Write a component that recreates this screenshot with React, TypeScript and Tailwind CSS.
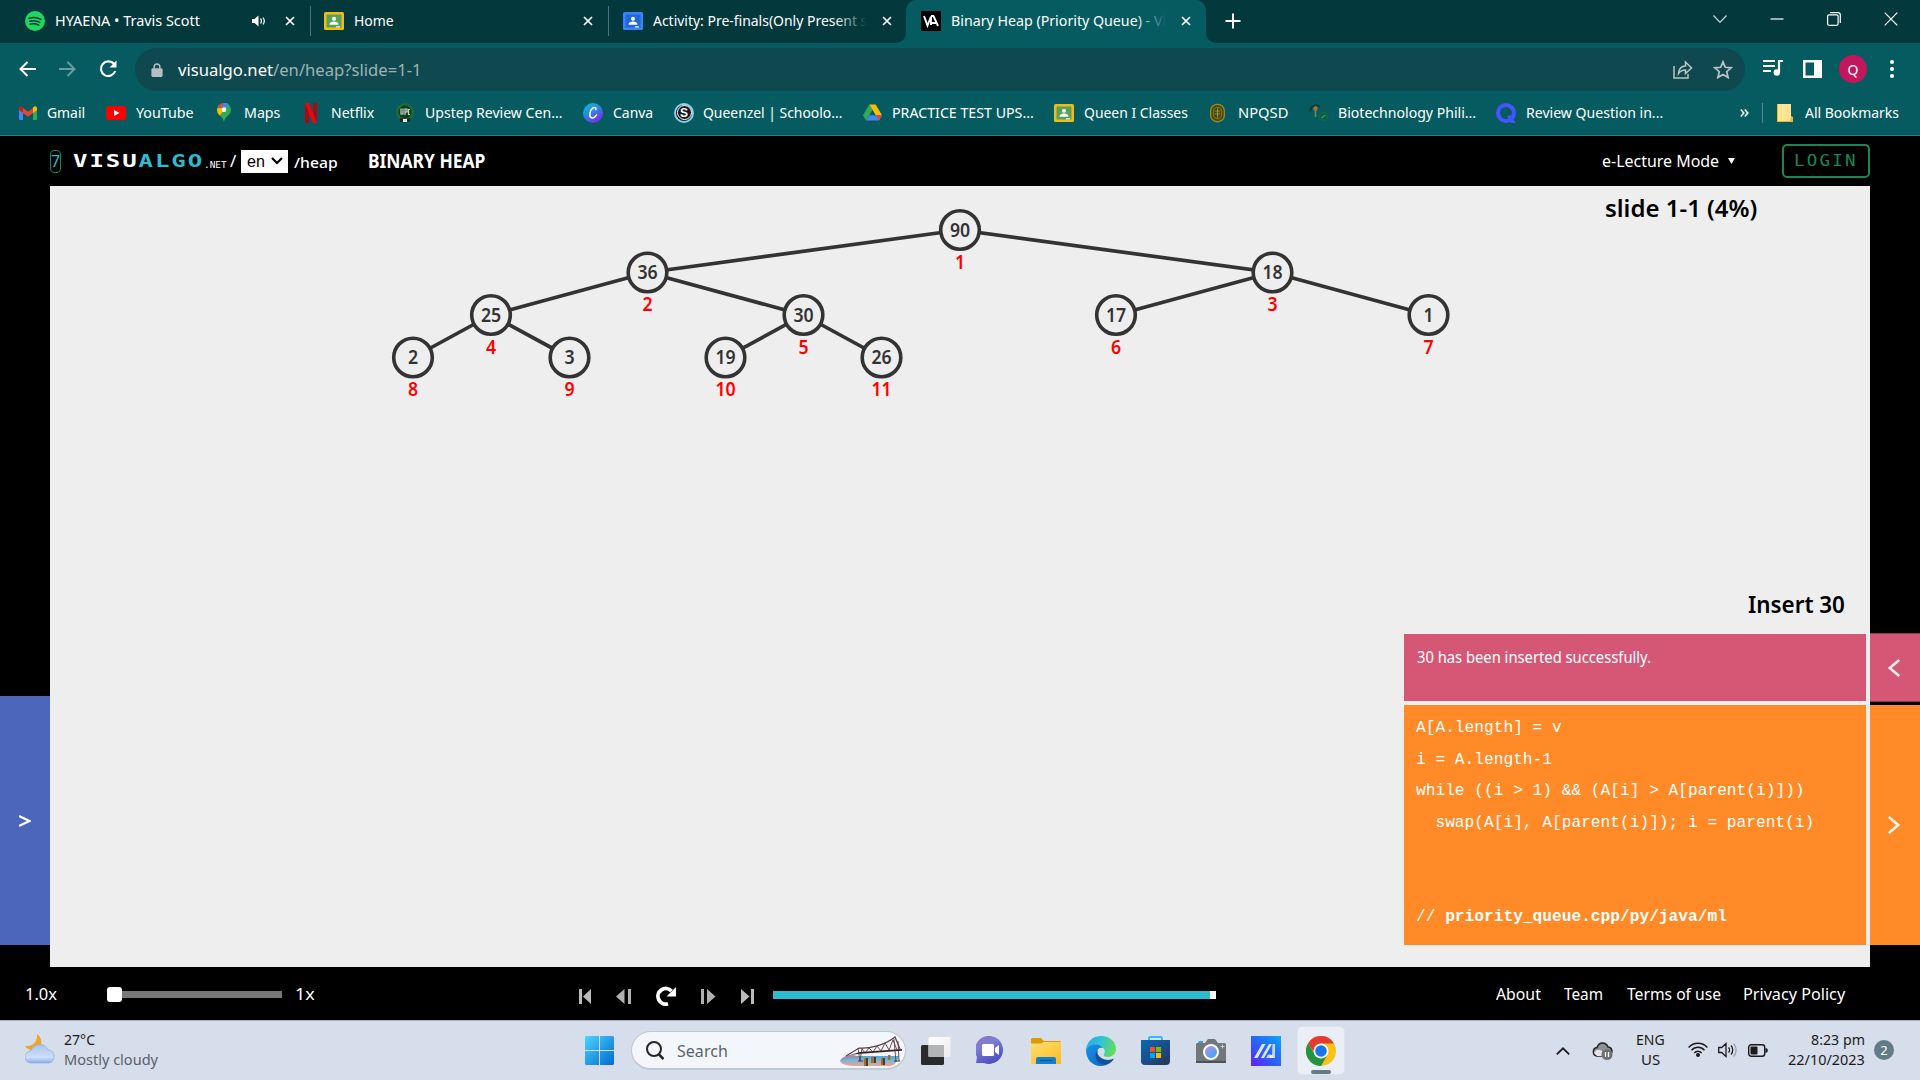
import { useLayoutEffect, useRef } from "react";
import type { ReactNode } from "react";

/** Single line of text stretched or condensed to fill the width of its box. */
function Fit({ className = "", inner = "", children }: { className?: string; inner?: string; children: ReactNode }) {
  const box = useRef<HTMLSpanElement>(null);
  const text = useRef<HTMLSpanElement>(null);
  useLayoutEffect(() => {
    if (box.current && text.current) {
      const scale = box.current.clientWidth / text.current.offsetWidth;
      text.current.style.transform = `scaleX(${scale})`;
    }
  }, []);
  return (
    <span ref={box} className={`block shrink-0 ${className}`}>
      <span ref={text} className={`inline-block origin-left whitespace-nowrap ${inner}`}>
        {children}
      </span>
    </span>
  );
}

function CloseX({ className = "" }: { className?: string }) {
  return (
    <svg viewBox="0 0 10 10" className={`h-[10px] w-[10px] shrink-0 ${className}`} stroke="#fff" strokeWidth="1.7">
      <path d="M1 1 9 9M9 1 1 9" />
    </svg>
  );
}

function Classroom({ frame, board }: { frame: string; board: string }) {
  return (
    <svg viewBox="0 0 20 18" className="h-[18px] w-5 shrink-0">
      <rect width="20" height="18" rx="1.5" fill={frame} />
      <rect x="2.5" y="2.5" width="15" height="13" fill={board} />
      <circle cx="10" cy="6.8" r="2" fill="#fff" />
      <path d="M5.5 12.8c0-2.6 2.3-3.4 4.5-3.4s4.5.8 4.5 3.4z" fill="#fff" />
      <rect x="12" y="14.2" width="4" height="1.3" fill="#e8eaed" />
    </svg>
  );
}

function TabStrip() {
  return (
    <div className="flex h-[43px] items-center bg-[#03383d] pb-px text-[15px] leading-[22px] text-white">
      <svg viewBox="0 0 20 20" className="ml-[25px] h-5 w-5 shrink-0">
        <circle cx="10" cy="10" r="10" fill="#1ed760" />
        <path d="M4 7.2c4-1.2 8.500-.8 12 1.200M4.600 10.300c3.500-1 7.200-.6 10.200 1.100M5.200 13.200c3-.8 6-.5 8.500.9" fill="none" stroke="#06363a" strokeWidth="1.500" strokeLinecap="round" />
      </svg>
      <Fit className="-mt-[2px] ml-[10px] w-[145px]">HYAENA • Travis Scott</Fit>
      <svg viewBox="0 0 13 12" className="ml-[52px] h-3 w-[13px] shrink-0" fill="#fff">
        <path d="M0 4h2.500L6.500.5v11L2.500 8H0z" />
        <path d="M8.500 3.500c1.200 1.200 1.200 3.800 0 5M11 2.500c1.500 2 1.500 5 0 7" fill="none" stroke="#fff" strokeWidth="1.200" />
      </svg>
      <CloseX className="ml-5" />
      <div className="ml-[15px] h-[30px] w-px bg-[#4c7478]" />
      <div className="ml-[13px] flex"><Classroom frame="#f5ba14" board="#57a15b" /></div>
      <Fit className="-mt-[2px] ml-[10px] w-10">Home</Fit>
      <CloseX className="ml-[189px]" />
      <div className="ml-[15px] h-[30px] w-px bg-[#4c7478]" />
      <div className="ml-[14px] flex"><Classroom frame="#3b82f6" board="#1f68da" /></div>
      <div className="relative -mt-[2px] ml-[10px] w-[214px] overflow-hidden">
        <Fit className="w-[214px]">Activity: Pre-finals(Only Present s</Fit>
        <div className="absolute inset-y-0 right-0 w-8 bg-linear-to-r from-transparent to-[#03383d]" />
      </div>
      <CloseX className="ml-[15px]" />
      <div className="-mb-px ml-[4px] h-[43px] w-[10px] bg-[#065b61]">
        <div className="h-full w-full rounded-br-[10px] bg-[#03383d]" />
      </div>
      <div className="-mb-px flex h-[43px] w-[300px] shrink-0 items-center rounded-t-[10px] bg-[#065b61] pb-px">
        <svg viewBox="0 0 20 20" className="ml-[15px] h-5 w-5 shrink-0">
          <rect width="20" height="20" fill="#000" />
          <path d="M3 5l3.500 9.500L10 5.500V14M10 5h2.500l4.500 10M10 12h5" fill="none" stroke="#fff" strokeWidth="1.900" />
        </svg>
        <div className="relative -mt-[2px] ml-[10px] w-[215px] overflow-hidden">
          <Fit className="w-[215px]">Binary Heap (Priority Queue) - Vi</Fit>
          <div className="absolute inset-y-0 right-0 w-8 bg-linear-to-r from-transparent to-[#065b61]" />
        </div>
        <CloseX className="ml-[15px]" />
      </div>
      <div className="-mb-px h-[43px] w-[10px] bg-[#065b61]">
        <div className="h-full w-full rounded-bl-[10px] bg-[#03383d]" />
      </div>
      <svg viewBox="0 0 16 16" className="ml-[9px] h-4 w-4 shrink-0" stroke="#fff" strokeWidth="2">
        <path d="M8 .5v15M.5 8h15" />
      </svg>
      <svg viewBox="0 0 14 8" className="-mt-[5px] ml-auto h-2 w-[14px]" fill="none" stroke="#dfe8e8" strokeWidth="1.100">
        <path d="M.5.500 7 7.300 13.500.5" />
      </svg>
      <svg viewBox="0 0 14 14" className="-mt-[5px] ml-[43px] h-[14px] w-[14px]" stroke="#fff" strokeWidth="1.200">
        <path d="M.5 7h13" />
      </svg>
      <svg viewBox="0 0 14 14" className="-mt-[5px] ml-[43px] h-[14px] w-[14px]" fill="none" stroke="#fff" strokeWidth="1.200">
        <rect x=".6" y="2.800" width="10.500" height="10.500" rx="1.500" />
        <path d="M3 .7h8a2.300 2.300 0 0 1 2.300 2.300v8" />
      </svg>
      <svg viewBox="0 0 14 14" className="-mt-[5px] mr-[22px] ml-[43px] h-[14px] w-[14px]" stroke="#fff" strokeWidth="1.200">
        <path d="M.7.700 13.300 13.300M13.300.7.700 13.300" />
      </svg>
    </div>
  );
}

function Toolbar() {
  return (
    <div className="flex h-[53px] items-center pb-[1px] text-white">
      <svg viewBox="0 0 17 16" className="ml-[19px] h-4 w-[17px] shrink-0" fill="none" stroke="#fff" strokeWidth="2">
        <path d="M8.500 1 1.500 8l7 7M1.500 8H17" />
      </svg>
      <svg viewBox="0 0 17 16" className="ml-[23px] h-4 w-[17px] shrink-0" fill="none" stroke="#6a9ca0" strokeWidth="2">
        <path d="m8.500 1 7 7-7 7M15.500 8H0" />
      </svg>
      <svg viewBox="0 0 18 18" className="ml-[23px] h-[18px] w-[18px] shrink-0">
        <path d="M15 4.200A7.300 7.300 0 1 0 16.200 11" fill="none" stroke="#fff" strokeWidth="2.100" />
        <path d="M17.500.5v7h-7z" fill="#fff" />
      </svg>
      <div className="ml-[18px] flex h-[43px] w-[1610px] shrink-0 items-center rounded-full bg-[#10484f]">
        <svg viewBox="0 0 12 15" className="mt-px ml-[16px] h-[14px] w-[12px] shrink-0">
          <rect y="5.500" width="12" height="9.500" rx="1.500" fill="#b6bfc2" />
          <path d="M3 6V4a3 3 0 0 1 6 0v2" fill="none" stroke="#b6bfc2" strokeWidth="1.600" />
        </svg>
        <Fit className="mt-[2px] ml-[15px] w-[244px] text-[16.500px] leading-6">
          visualgo.net<span className="text-[#9cb4b7]">/en/heap?slide=1-1</span>
        </Fit>
        <svg viewBox="0 0 20 19" className="ml-auto h-[19px] w-5" fill="none" stroke="#b9c5c7" strokeWidth="1.500">
          <path d="M1 6v12h14v-4M5.500 13.500c.5-5 3.500-7.500 7-7.500V2l6 6-6 5.500V10c-3 0-5.200 1-7 3.500z" />
        </svg>
        <svg viewBox="0 0 20 19" className="mr-[12px] ml-[20px] h-[19px] w-5" fill="none" stroke="#b9c5c7" strokeWidth="1.700">
          <path d="m10 1.800 2.300 5.500 5.900.5-4.500 3.900 1.400 5.800-5.100-3.100-5.100 3.100 1.400-5.800-4.500-3.900 5.900-.5z" />
        </svg>
      </div>
      <svg viewBox="0 0 20 17" className="-mt-1 ml-[18px] h-[17px] w-5 shrink-0">
        <path d="M0 2h12M0 7h12M0 12h8" stroke="#fff" strokeWidth="2.100" />
        <path d="M16 13.500V2h4" fill="none" stroke="#fff" strokeWidth="2.200" />
        <circle cx="13.800" cy="13.500" r="3.200" fill="#fff" />
      </svg>
      <svg viewBox="0 0 19 18" className="ml-[20px] h-[18px] w-[19px] shrink-0">
        <path d="M0 0h19v18H0zM2.500 2.500v13H11v-13z" fill="#fff" fillRule="evenodd" />
      </svg>
      <div className="ml-[17px] flex h-7 w-7 shrink-0 items-center justify-center rounded-full bg-[#c2185b] text-[14px]">Q</div>
      <svg viewBox="0 0 4 18" className="ml-[23px] h-[18px] w-1 shrink-0" fill="#fff">
        <circle cx="2" cy="2" r="2" /><circle cx="2" cy="9" r="2" /><circle cx="2" cy="16" r="2" />
      </svg>
    </div>
  );
}

function Bookmarks() {
  return (
    <div className="flex h-[39px] items-center pb-[6px] text-[15px] leading-[22px] text-white">
      <svg viewBox="0 0 18 14" className="ml-[19px] h-[14px] w-[18px] shrink-0">
        <path d="M0 2v11a1 1 0 0 0 1 1h3V5z" fill="#4285f4" />
        <path d="M18 2v11a1 1 0 0 1-1 1h-3V5z" fill="#34a853" />
        <path d="M4 7V2l5 3.800L14 2v5l-5 3.800z" fill="#ea4335" />
        <path d="M14 7V1.500C16-.6 18 .5 18 2.500V4z" fill="#fbbc04" />
        <path d="M4 7V1.500C2-.6 0 .5 0 2.500V4z" fill="#c5221f" />
      </svg>
      <Fit className="-mt-px ml-[10px] w-[38px]">Gmail</Fit>
      <svg viewBox="0 0 20 14" className="ml-[21px] h-[14px] w-5 shrink-0">
        <rect width="20" height="14" rx="3" fill="#f00" /><path d="m8 4 5.500 3L8 10z" fill="#fff" />
      </svg>
      <Fit className="-mt-px ml-[10px] w-[58px]">YouTube</Fit>
      <svg viewBox="0 0 14 19" className="ml-[23px] h-[19px] w-[14px] shrink-0">
        <path d="M7 0C3 0 0 3 0 7c0 5 6 6 7 12 1-6 7-7 7-12 0-4-3-7-7-7z" fill="#34a853" />
        <path d="M.8 3.800 5 7l6.500-6C10.300.3 8.700 0 7 0 4.300 0 2 1.400.8 3.800z" fill="#ea4335" />
        <path d="M7 0c1.700 0 3.300.4 4.800 1.800L7 7 4 4z" fill="#4285f4" />
        <path d="m2.500 12.500 7-8L.3 5.200C-.4 8.500.8 10.500 2.500 12.500z" fill="#fbbc04" />
        <circle cx="7" cy="6.800" r="2.300" fill="#fff" />
      </svg>
      <Fit className="-mt-px ml-[13px] w-[36px]">Maps</Fit>
      <svg viewBox="0 0 12 20" className="ml-[25px] h-5 w-3 shrink-0">
        <path d="M0 0h4v20l-4 .0zM8 0h4v20H8z" fill="#b1060f" /><path d="M0 0h4l8 20H8z" fill="#e50914" />
      </svg>
      <Fit className="-mt-px ml-[14px] w-[43px]">Netflix</Fit>
      <svg viewBox="0 0 20 20" className="ml-[21px] h-5 w-5 shrink-0">
        <circle cx="10" cy="9" r="9" fill="#1d6b35" /><circle cx="10" cy="9" r="6.500" fill="#0d3f20" />
        <path d="M6 5.500v5.500h2V5.500M10 12V6h2v3h-2M15 6.500h-1.500v5H15" stroke="#c9d6c9" fill="none" strokeWidth="1.200" />
        <path d="m5 15 5 1.500 5-1.500v4l-5-1.500L5 19z" fill="#222" /><path d="M8 16h4v3H8z" fill="#eee" />
      </svg>
      <Fit className="-mt-px ml-[10px] w-[137px]">Upstep Review Cen...</Fit>
      <svg viewBox="0 0 20 20" className="ml-[21px] h-5 w-5 shrink-0">
        <defs><linearGradient id="canva" x1="0" y1="0" x2=".6" y2="1"><stop stopColor="#00c4cc" /><stop offset=".5" stopColor="#2b8be0" /><stop offset="1" stopColor="#7d2ae8" /></linearGradient></defs>
        <circle cx="10" cy="10" r="10" fill="url(#canva)" />
        <path d="M12.800 6.700c.8-1.700-.8-3-3-1.500C6.500 7.400 5.600 14 8.700 14.800c2 .4 3.800-1 4.800-2.800" fill="none" stroke="#fff" strokeWidth="1.500" strokeLinecap="round" />
      </svg>
      <Fit className="-mt-px ml-[10px] w-10">Canva</Fit>
      <div className="ml-[21px] flex h-5 w-5 shrink-0 items-center justify-center rounded-full border-2 border-[#8dcdf0] bg-[#16181c] font-['Liberation_Sans'] text-[12px] leading-none font-bold">
        <span className="flex h-[15px] w-[15px] items-center justify-center rounded-full border border-white">S</span>
      </div>
      <Fit className="-mt-px ml-[9px] w-[139px]">Queenzel | Schoolo...</Fit>
      <svg viewBox="0 0 20 17" className="ml-[21px] h-[17px] w-[19px] shrink-0">
        <path d="M6.700 0 0 11.500 3.300 17 10 5.700z" fill="#34a853" /><path d="M6.700 0h6.600L20 11.500h-6.600z" fill="#fbbc04" />
        <path d="M6.500 11.500H20L16.700 17H3.300z" fill="#4285f4" /><path d="M13.500 11.500H20L16.700 17z" fill="#ea4335" />
      </svg>
      <Fit className="-mt-px ml-[10px] w-[142px]">PRACTICE TEST UPS...</Fit>
      <div className="ml-[20px] flex"><Classroom frame="#f5ba14" board="#57a15b" /></div>
      <Fit className="-mt-px ml-[10px] w-[104px]">Queen I Classes</Fit>
      <svg viewBox="0 0 16 20" className="ml-[22px] h-5 w-[15px] shrink-0">
        <rect x=".7" y=".7" width="14.600" height="18.600" rx="7" fill="#3f4a14" stroke="#a8871a" strokeWidth="1.400" />
        <rect x="3.500" y="4" width="9" height="12" rx="4" fill="none" stroke="#8c7a1e" /><path d="M5 8h6M5 11h6M8 5v10" stroke="#b08f20" />
      </svg>
      <Fit className="-mt-px ml-[13px] w-[50px]">NPQSD</Fit>
      <svg viewBox="0 0 20 18" className="ml-[21px] h-[18px] w-5 shrink-0" fill="none">
        <path d="M1 7C2 2 7-.5 11 3" stroke="#143a35" strokeWidth="2" /><circle cx="6.500" cy="4.500" r="2.200" fill="#a5762f" />
        <path d="M6.500 6v7" stroke="#7a8a3c" strokeWidth="1.500" /><circle cx="14.500" cy="12.500" r="4" fill="#0d5645" stroke="#0a6b4b" strokeWidth="1.500" />
        <path d="m12.500 14 4-3" stroke="#35a06a" strokeWidth="1.500" />
      </svg>
      <Fit className="-mt-px ml-[9px] w-[138px]">Biotechnology Phili...</Fit>
      <svg viewBox="0 0 20 20" className="ml-[20px] h-5 w-5 shrink-0">
        <circle cx="10" cy="10" r="8" fill="none" stroke="#4255ff" strokeWidth="4" /><path d="m11 13 4-1 4.500 8H15z" fill="#4255ff" />
      </svg>
      <Fit className="-mt-px ml-[10px] w-[137px]">Review Question in...</Fit>
      <svg viewBox="0 0 9 8" className="ml-[77px] h-2 w-[9px] shrink-0" fill="none" stroke="#fff" strokeWidth="1.600">
        <path d="m.8.500 3 3.500-3 3.500M4.800.500l3 3.500-3 3.500" />
      </svg>
      <div className="ml-[13px] h-5 w-px shrink-0 bg-[#4f8d91]" />
      <svg viewBox="0 0 16 18" className="ml-[14px] h-[18px] w-4 shrink-0">
        <path d="M0 0h14v12l2 1v5H0z" fill="#e5b93c" /><path d="M1 0h13v13l-1 4H1z" fill="#ffe491" />
      </svg>
      <Fit className="-mt-px ml-[12px] w-[94px]">All Bookmarks</Fit>
    </div>
  );
}

function SiteHeader() {
  return (
    <div className="flex h-[50px] items-center bg-black text-white">
      <div className="ml-[50px] flex h-[23px] w-[11px] shrink-0 items-center justify-center rounded-[4px] border border-[#198754] text-[16px] text-[#2ebbd1]">7</div>
      <Fit className="ml-[12px] w-[131px] font-['DejaVu_Sans_Mono'] text-[18.500px] leading-6" inner="font-bold tracking-[1.500px]">
        VISU<span className="text-[#2ebbd1]">ALGO</span>
      </Fit>
      <Fit className="mt-[7px] w-[23px] font-['DejaVu_Sans_Mono'] text-[9px] leading-3">.NET</Fit>
      <span className="ml-[3px] w-[8px] text-[17px]">/</span>
      <div className="ml-[3px] flex h-[23px] w-[47px] shrink-0 items-center bg-white pl-[6px] text-black">
        <Fit className="mt-[2px] w-[18px] font-['Liberation_Sans'] text-[17px] leading-5">en</Fit>
        <svg viewBox="0 0 12 8" className="ml-[6px] h-2 w-3" fill="none" stroke="#000" strokeWidth="2.200"><path d="m1 1 5 5 5-5" /></svg>
      </div>
      <Fit className="mt-[2px] ml-[6px] w-[44px] text-[15px] leading-5" inner="font-medium">/heap</Fit>
      <Fit className="ml-[30px] w-[117px] text-[19.500px] leading-6" inner="font-bold">BINARY HEAP</Fit>
      <Fit className="ml-auto w-[117px] text-[16.500px] leading-6">e-Lecture Mode</Fit>
      <svg viewBox="0 0 7 6" className="mr-[47px] ml-[9px] h-[6px] w-[7px]" fill="#fff"><path d="M0 0h7L3.500 6z" /></svg>
      <div className="mr-[50px] flex h-[34px] w-[88px] items-center justify-center rounded-[5px] border-2 border-[#198754] text-[#198754]">
        <Fit className="w-[64px] font-['DejaVu_Sans_Mono'] text-[16.500px] leading-5" inner="tracking-[2px]">LOGIN</Fit>
      </div>
    </div>
  );
}

const nodes = [
  { v: 90, x: 910, y: 44 },
  { v: 36, x: 597.5, y: 86.5 },
  { v: 18, x: 1222.5, y: 86.5 },
  { v: 25, x: 441, y: 129 },
  { v: 30, x: 753.5, y: 129 },
  { v: 17, x: 1066, y: 129 },
  { v: 1, x: 1378.5, y: 129 },
  { v: 2, x: 363, y: 171.5 },
  { v: 3, x: 519.5, y: 171.5 },
  { v: 19, x: 675.5, y: 171.5 },
  { v: 26, x: 831.5, y: 171.5 },
];

function HeapTree() {
  return (
    <svg viewBox="0 0 1820 220" className="absolute top-0 left-0 h-[220px] w-[1820px] font-['Noto_Sans']">
      {nodes.slice(1).map((n, i) => {
        const p = nodes[Math.floor(i / 2)];
        return <line key={n.v} x1={p.x} y1={p.y} x2={n.x} y2={n.y} stroke="#333" strokeWidth="3.700" />;
      })}
      {nodes.map((n, i) => (
        <g key={n.v} textAnchor="middle" fontSize="19">
          <circle cx={n.x} cy={n.y} r="19.300" fill="#eee" stroke="#333" strokeWidth="3.600" />
          <text transform={`translate(${n.x} ${n.y + 6.5}) scale(.93 1)`} fill="#333" fontWeight="600">{n.v}</text>
          <text transform={`translate(${n.x} ${n.y + 38.8}) scale(.93 1)`} fill="#f00" fontWeight="600">{i + 1}</text>
        </g>
      ))}
    </svg>
  );
}

const code = [
  "A[A.length] = v",
  "i = A.length-1",
  "while ((i > 1) && (A[i] > A[parent(i)]))",
  "  swap(A[i], A[parent(i)]); i = parent(i)",
];

function Angle({ left = false }: { left?: boolean }) {
  return (
    <svg viewBox="0 0 12 18" className="mr-[2px] h-[18px] w-3" fill="none" stroke="#fff" strokeOpacity=".9" strokeWidth="2.600">
      <path d={left ? "M11.300 1 1.800 9l9.500 8" : "M.7 1 10.200 9 .7 17"} />
    </svg>
  );
}

function Stage() {
  return (
    <div className="flex h-[781px] bg-black">
      <div className="flex w-[50px] flex-col pt-[510px]">
        <div className="flex h-[249px] items-center justify-center bg-[#4b66ba]">
          <svg viewBox="0 0 12 12" className="h-3 w-3" fill="none" stroke="#fff" strokeWidth="2.200"><path d="M0 1l10.500 5L0 11" /></svg>
        </div>
      </div>
      <div className="relative flex w-[1820px] flex-col items-end bg-[#eee] text-black">
        <HeapTree />
        <Fit className="mt-[6px] mr-[113px] w-[152px] text-[24px] leading-8" inner="font-semibold">slide 1-1 (4%)</Fit>
        <Fit className="mt-[364px] mr-[25px] w-[97px] text-[24px] leading-8" inner="font-semibold">Insert 30</Fit>
        <div className="mt-[14px] mr-[4px] h-[67px] w-[462px] bg-[#d65775] pt-[12px] pl-[13px] text-white">
          <Fit className="w-[234px] text-[15.500px] leading-[22px]">30 has been inserted successfully.</Fit>
        </div>
        <div className="mt-[4px] mr-[4px] h-[240px] w-[462px] bg-[#ff8a27] pt-[8px] pl-[12px] font-['Liberation_Mono'] text-[16.200px] leading-[31.600px] whitespace-pre text-white">
          {code.map((line) => (
            <div key={line}>{line}</div>
          ))}
          <div className="mt-[63px]">// <span className="font-bold">priority_queue.cpp/py/java/ml</span></div>
        </div>
      </div>
      <div className="flex w-[50px] flex-col pt-[447px]">
        <div className="flex h-[69px] items-center justify-center border-y border-[#8a3a4d] bg-[#d65775]"><Angle left /></div>
        <div className="mt-[3px] flex h-[240px] items-center justify-center bg-[#ff8a27]"><Angle /></div>
      </div>
    </div>
  );
}

function Controls() {
  return (
    <div className="flex h-[53px] items-center bg-black text-[17px] leading-6 text-white">
      <Fit className="ml-[25px] w-[32px]">1.0x</Fit>
      <div className="mt-px ml-[50px] flex w-[175px] shrink-0 items-center">
        <div className="h-[15px] w-[15px] rounded-[3px] bg-white" />
        <div className="h-[7px] flex-1 bg-[#777]" />
      </div>
      <Fit className="mt-px ml-[13px] w-[20px]">1x</Fit>
      <svg viewBox="0 0 12 15" className="mt-[5px] ml-[264px] h-[15px] w-3 shrink-0" fill="#bbb"><path d="M0 0h3v15H0zM12 0v15L4 7.500z" /></svg>
      <svg viewBox="0 0 15 15" className="mt-[5px] ml-[25px] h-[15px] w-[15px] shrink-0" fill="#b0b0b0"><path d="M12 0h3v15h-3zM8.500 0v15L0 7.500z" /></svg>
      <svg viewBox="0 0 20 20" className="mt-[4px] ml-[25px] h-5 w-5 shrink-0">
        <path d="M15.500 5A7.800 7.800 0 1 0 12 17.800" fill="none" stroke="#fff" strokeWidth="3.800" /><path d="M20 1v9.500h-9.500z" fill="#fff" />
      </svg>
      <svg viewBox="0 0 15 15" className="mt-[5px] ml-[25px] h-[15px] w-[15px] shrink-0" fill="#b0b0b0"><path d="M0 0h3v15H0zM6 0v15l8.500-7.500z" /></svg>
      <svg viewBox="0 0 13 15" className="mt-[5px] ml-[25px] h-[15px] w-[13px] shrink-0" fill="#bbb"><path d="M10 0h3v15h-3zM0 0v15l8.500-7.500z" /></svg>
      <div className="mt-[3px] ml-[19px] flex h-2 w-[443px] shrink-0 bg-[#2ebbd1]"><div className="ml-auto h-2 w-[6px] bg-white" /></div>
      <div className="ml-[280px] flex text-[16.500px]">
        <Fit className="w-[45px]">About</Fit>
        <Fit className="ml-[23px] w-[39px]">Team</Fit>
        <Fit className="ml-[24px] w-[94px]">Terms of use</Fit>
        <Fit className="ml-[22px] w-[102px]">Privacy Policy</Fit>
      </div>
    </div>
  );
}

function Bridge() {
  return (
    <svg viewBox="0 0 62 30" className="mt-px ml-[112px] h-[30px] w-[62px] shrink-0">
      <defs>
        <linearGradient id="water" x1="0" y1="0" x2="0" y2="1"><stop stopColor="#4fa6d6" /><stop offset=".4" stopColor="#75b6db" /><stop offset="1" stopColor="#f2a38b" /></linearGradient>
      </defs>
      <path d="M0 25c2-4 8-5 13-5l46 0c-1 5-5 10-9 10H16C9 30 1 29 0 25z" fill="url(#water)" />
      <path d="M0 25c2-4 9-7 13-6l4 1 3 2H8z" fill="#a58cae" />
      <path d="M6 20 19 12c10 1 26-3 36-11l5 12" fill="none" stroke="#5a4043" strokeWidth="1.200" />
      <path d="M18 12l2 13M22 12l-2 13M58 5l1 20M54 3l2 23M22 13l3 4 4-5 4 4 4-6 4 5 4-8 4 7 4-10 4 10" fill="none" stroke="#5a4043" strokeWidth=".9" />
      <path d="M10 19 20 16 62 13v1.800L18 18z" fill="#3c2526" />
      <path d="M18 25h5M54 25h6" stroke="#4a3033" strokeWidth="1.200" />
      <path d="M24 22h4v8h-4zM31 21h5v6h-5zM41 22h4v7h-4zM48 19h2.500v5H48z" fill="#9a7038" />
      <path d="M26 22h2v8h-2zM34 21h2v6h-2zM43 22h2v7h-2z" fill="#4e3a28" />
    </svg>
  );
}

function Taskbar() {
  return (
    <div className="flex h-[60px] items-center border-t border-[#a9b0bb] bg-[#d6deeb] text-[15px] leading-5 text-[#1b1b1b]">
      <svg viewBox="0 0 30 30" className="-mt-[4px] ml-[25px] h-[30px] w-[30px] shrink-0">
        <defs><linearGradient id="cloud" x1="0" y1="0" x2="0" y2="1"><stop stopColor="#a9c5f0" /><stop offset=".7" stopColor="#cddff8" /><stop offset="1" stopColor="#86aae8" /></linearGradient></defs>
        <path d="M12 0c7 5 6 17-5 16-3 0-6-2-7-4C7 13 13 8 12 0z" fill="#f3a621" />
        <path d="M6 29a6 6 0 0 1 0-12c2-8 14-9 17-1a6.600 6.600 0 0 1 1 13z" fill="url(#cloud)" stroke="#8aa9e2" strokeWidth=".7" />
      </svg>
      <div className="-mt-[4px] ml-[9px] w-[95px] shrink-0">
        <Fit className="w-[31px]">27°C</Fit>
        <Fit className="w-[94px] text-[#5b6068]">Mostly cloudy</Fit>
      </div>
      <svg viewBox="0 0 29 29" className="ml-[426px] h-[29px] w-[29px] shrink-0">
        <defs><linearGradient id="win" x1="0" y1="0" x2="1" y2="1"><stop stopColor="#4cd4ff" /><stop offset="1" stopColor="#0069cf" /></linearGradient></defs>
        <path d="M1 0h13v14H0V1zM15 0h13l1 1v13H15zM0 15h14v14H1l-1-1zM15 15h14v13l-1 1H15z" fill="url(#win)" />
      </svg>
      <div className="ml-[17px] flex h-[39px] w-[275px] shrink-0 items-center rounded-full border border-b-2 border-[#c0c8d4] bg-[#f3f6fb]">
        <svg viewBox="0 0 18 19" className="ml-[14px] h-[19px] w-[18px] shrink-0" fill="none" stroke="#252525" strokeWidth="2">
          <circle cx="8" cy="8" r="7" /><path d="m12.500 13 5 5" strokeWidth="2.500" />
        </svg>
        <Fit className="mt-px ml-[13px] w-[51px] text-[17px] leading-6 text-[#5f6368]">Search</Fit>
        <Bridge />
      </div>
      <svg viewBox="0 0 30 28" className="ml-[15px] h-7 w-[30px] shrink-0">
        <defs><linearGradient id="tv" x1="0" y1="0" x2="1" y2="1"><stop stopColor="#ffffff" /><stop offset="1" stopColor="#ececec" /></linearGradient></defs>
        <rect y="8" width="23" height="20" rx="1.500" fill="#2b2b2b" /><rect x="7.500" y="0" width="22" height="20" rx="1.500" fill="url(#tv)" /><path d="M7.500 8H23v12H7.500z" fill="#b3b4b5" />
      </svg>
      <svg viewBox="0 0 29 29" className="ml-[25px] h-[29px] w-[29px] shrink-0">
        <defs><linearGradient id="chat" x1="0" y1="0" x2=".5" y2="1"><stop stopColor="#9572b4" /><stop offset=".4" stopColor="#7d7fd6" /><stop offset="1" stopColor="#4e50c4" /></linearGradient></defs>
        <path d="M14.500 0a14 14 0 1 1-6.500 27H0l1-6A14 14 0 0 1 14.500 0z" fill="url(#chat)" />
        <rect x="6" y="8" width="12" height="12" rx="1.500" fill="#fff" /><path d="m19 12 4-3v10l-4-3z" fill="#fff" />
      </svg>
      <svg viewBox="0 0 30 26" className="ml-[26px] h-[26px] w-[30px] shrink-0">
        <defs><linearGradient id="folder" x1="0" y1="0" x2="1" y2="1"><stop stopColor="#ffdf73" /><stop offset="1" stopColor="#fcb91f" /></linearGradient></defs>
        <path d="M1 0h9l3 3h16l1 1v5H0V1z" fill="#dc9a08" /><path d="M0 5.500h10L13 4h17v22H0z" fill="url(#folder)" />
        <path d="M5 26v-5a2 2 0 0 1 2-2h16a2 2 0 0 1 2 2v5z" fill="#1280cf" /><path d="M8.500 22.500h13" stroke="#0b568f" strokeWidth="1.300" />
      </svg>
      <svg viewBox="0 0 30 30" className="ml-[25px] h-[30px] w-[30px] shrink-0">
        <defs>
          <linearGradient id="edgeTop" x1="0" y1=".2" x2="1" y2=".5"><stop stopColor="#2aa7e8" /><stop offset=".5" stopColor="#35c4d2" /><stop offset="1" stopColor="#62de55" /></linearGradient>
          <linearGradient id="edgeSide" x1="0" y1="0" x2="1" y2="1"><stop stopColor="#1692e8" /><stop offset="1" stopColor="#0e62c0" /></linearGradient>
        </defs>
        <path d="M0 14C1 5 7 0 15 0c9 0 15 6 15 13 0 5-4 8-8 8-3 0-5-1-4-3 2-3 0-6-3-7C9 9 3 10 0 14z" fill="url(#edgeTop)" />
        <path d="M0 14c3-6 12-8 17-2-4-1-6 1-6 5 0 7 6 11 13 10-3 2-6 3-9 3C6 30 0 23 0 14z" fill="url(#edgeSide)" />
        <path d="M11.500 14C9 17 9 21 11 24.500c2 3.500 7 5 12 3 2-1 4-3 5-5-6 3-14 1-16.500-5z" fill="#12529c" />
      </svg>
      <svg viewBox="0 0 29 29" className="ml-[25px] h-[29px] w-[29px] shrink-0">
        <defs><linearGradient id="store" x1="0" y1="0" x2="1" y2="1"><stop stopColor="#0b68b8" /><stop offset="1" stopColor="#28355c" /></linearGradient></defs>
        <path d="M8 6V2.500A1.500 1.500 0 0 1 9.500 1h10A1.500 1.500 0 0 1 21 2.500V6" fill="none" stroke="#34bdf0" strokeWidth="2" />
        <path d="M0 4h29v21a4 4 0 0 1-4 4H4a4 4 0 0 1-4-4z" fill="url(#store)" />
        <path d="M9 11h5v5H9z" fill="#f25022" /><path d="M15 11h5v5h-5z" fill="#7fba00" /><path d="M9 17h5v5H9z" fill="#00a4ef" /><path d="M15 17h5v5h-5z" fill="#ffb900" />
      </svg>
      <svg viewBox="0 0 30 24" className="ml-[26px] h-6 w-[30px] shrink-0">
        <defs><linearGradient id="lens" x1="0" y1="0" x2=".6" y2="1"><stop stopColor="#c58bf0" /><stop offset="1" stopColor="#3ba9ee" /></linearGradient></defs>
        <path d="M2 4l1-2h4v3z" fill="#2ea0dc" /><path d="M0 5 1 4h8l3-4h7l3 4h7l1 1v19H0z" fill="#72777b" /><path d="M0 22h30v2H0z" fill="#4d5256" />
        <circle cx="15" cy="13" r="7" fill="url(#lens)" stroke="#fff" strokeWidth="2" /><path d="M26.500 5.500v4M24.500 7.500h4" stroke="#c9ccd0" />
      </svg>
      <svg viewBox="0 0 30 30" className="ml-[25px] h-[30px] w-[30px] shrink-0">
        <defs><linearGradient id="asus" x1="0" y1="1" x2="1" y2="0"><stop stopColor="#6420f5" /><stop offset=".45" stopColor="#2f5df8" /><stop offset="1" stopColor="#08a6ff" /></linearGradient></defs>
        <rect width="30" height="30" fill="url(#asus)" />
        <path d="m3 22 8-14h3.500l-8 14zM10 22l8-14h3l-8 14z" fill="#dde6ff" /><path d="M21.500 8H24v14h-3zM15 22l2-3.500h3V22z" fill="#c8d4ff" /><circle cx="20.500" cy="20.500" r="1.500" fill="#fff" />
      </svg>
      <div className="relative ml-[16px] flex h-[49px] w-[48px] shrink-0 items-center justify-center rounded-[5px] border border-[#dde3ed] bg-[#eaeef6]">
        <svg viewBox="0 0 30 30" className="h-[30px] w-[30px]">
          <circle cx="15" cy="15" r="15" fill="#fbc116" />
          <path d="M15 7.500h13A15 15 0 0 0 2 7.500L9 18z" fill="#e33b2e" />
          <path d="M2 7.500A15 15 0 0 0 15 30l6.500-11.200L9 18.800z" fill="#229342" />
          <circle cx="15" cy="15" r="7.500" fill="#fff" /><circle cx="15" cy="15" r="5.800" fill="#1a73e8" />
        </svg>
        <div className="absolute bottom-0 h-1 w-5 rounded-full bg-[#627b87]" />
      </div>
      <svg viewBox="0 0 14 8" className="ml-[211px] h-2 w-[14px] shrink-0" fill="none" stroke="#1b1b1b" strokeWidth="1.800"><path d="m.8 7.300 6.200-6 6.200 6" /></svg>
      <svg viewBox="0 0 21 18" className="ml-[22px] h-[18px] w-[21px] shrink-0">
        <path d="M5 14a4.300 4.300 0 0 1 0-8.500C7-.5 14-.5 16 5c3 .2 4 2.500 4 5l-4 4z" fill="#8e9196" stroke="#222" strokeWidth="1.500" />
        <path d="M2 11c2-4 6-4 9-1v4H5z" fill="#e4e6ea" /><circle cx="15" cy="12.500" r="5.500" fill="#6d6f73" /><path d="M13.500 10v5M16.500 10v5" stroke="#fff" strokeWidth="1.300" />
      </svg>
      <div className="-mt-[3px] ml-[23px] w-[29px] shrink-0">
        <Fit className="w-[29px]">ENG</Fit>
        <Fit className="ml-[5px] w-[19px]">US</Fit>
      </div>
      <svg viewBox="0 0 20 15" className="-mt-[2px] ml-[23px] h-[15px] w-5 shrink-0" fill="none" stroke="#1b1b1b" strokeWidth="1.400">
        <path d="M.6 5.500c5.200-5.600 13.600-5.600 18.800 0M3.500 8.300c3.700-4 9.300-4 13 0M6.300 11c2.200-2.300 5.200-2.300 7.400 0" /><circle cx="10" cy="13" r="1.300" fill="#1b1b1b" />
      </svg>
      <svg viewBox="0 0 20 16" className="-mt-[2px] ml-[10px] h-4 w-5 shrink-0" fill="none" stroke="#1b1b1b" strokeWidth="1.300">
        <path d="M.7 5.500h3L8 1.500v13l-4.300-4h-3zM10.500 5.500c1.300 1.300 1.300 3.700 0 5M13 3.500c2.300 2.500 2.300 6.500 0 9" /><path d="M15.500 1.500c3.500 3.500 3.500 9.500 0 13" stroke="#9aa1ac" />
      </svg>
      <svg viewBox="0 0 20 13" className="-mt-px ml-[10px] h-[13px] w-5 shrink-0">
        <rect x=".7" y=".7" width="16" height="11.600" rx="2.500" fill="none" stroke="#1b1b1b" strokeWidth="1.400" /><rect x="2.500" y="2.500" width="7" height="8" rx="1" fill="#1b1b1b" /><path d="M17.500 4c3 0 3 5 0 5z" fill="#1b1b1b" />
      </svg>
      <div className="-mt-[4px] ml-[20px] flex w-[77px] shrink-0 flex-col items-end">
        <Fit className="w-[54px]">8:23 pm</Fit>
        <Fit className="w-[77px]">22/10/2023</Fit>
      </div>
      <div className="-mt-px ml-[9px] flex h-5 w-5 shrink-0 items-center justify-center rounded-full bg-[#627b87] text-[13px] text-white">2</div>
    </div>
  );
}

export default function App() {
  return (
    <div className="flex h-[1080px] w-[1920px] flex-col overflow-hidden bg-black font-['Noto_Sans',sans-serif]">
      <TabStrip />
      <div className="h-[93px] border-b border-[#2c7a80] bg-[#065b61]">
        <Toolbar />
        <Bookmarks />
      </div>
      <SiteHeader />
      <Stage />
      <Controls />
      <Taskbar />
    </div>
  );
}
